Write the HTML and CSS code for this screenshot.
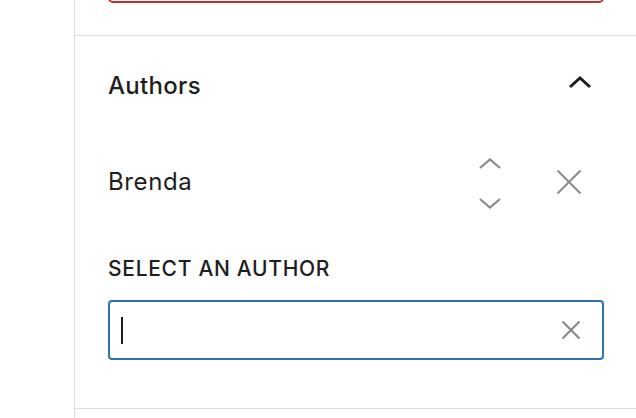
FILE: index.html
```html
<!DOCTYPE html>
<html lang="en">
<head>
<meta charset="utf-8">
<title>Authors panel</title>
<link rel="stylesheet" href="styles.css">
</head>
<body>
<div class="layout">
  <div class="gutter"></div>
  <aside class="sidebar">
    <div class="prev-panel">
      <div class="error-field"></div>
    </div>
    <section class="panel">
      <div class="panel-header">
        <h2 class="panel-title">Authors</h2>
        <svg class="toggle-icon" width="24" height="24" viewBox="0 0 24 24" aria-hidden="true">
          <path d="M2 16 L12 7 L22 16" fill="none" stroke="#1e1e1e" stroke-width="3"/>
        </svg>
      </div>
      <div class="author-row">
        <span class="author-name">Brenda</span>
        <div class="movers">
          <svg width="24" height="14" viewBox="0 0 24 14" aria-hidden="true">
            <path d="M2 11 L12 2.5 L22 11" fill="none" stroke="#8a8a8a" stroke-width="2.2"/>
          </svg>
          <svg width="24" height="14" viewBox="0 0 24 14" aria-hidden="true">
            <path d="M2 3 L12 11.5 L22 3" fill="none" stroke="#8a8a8a" stroke-width="2.2"/>
          </svg>
        </div>
        <svg class="remove-icon" width="26" height="26" viewBox="0 0 26 26" aria-hidden="true">
          <path d="M1.5 1.5 L24.5 24.5 M24.5 1.5 L1.5 24.5" fill="none" stroke="#8a8a8a" stroke-width="2"/>
        </svg>
      </div>
      <div class="field-label">SELECT AN AUTHOR</div>
      <div class="combo">
        <span class="caret"></span>
        <svg class="clear-icon" width="20" height="20" viewBox="0 0 20 20" aria-hidden="true">
          <path d="M1.5 1.5 L18.5 18.5 M18.5 1.5 L1.5 18.5" fill="none" stroke="#8a8a8a" stroke-width="2.2"/>
        </svg>
      </div>
    </section>
  </aside>
</div>
</body>
</html>
```

FILE: styles.css
```css
* {
  box-sizing: border-box;
}

html, body {
  margin: 0;
  padding: 0;
  background: #ffffff;
}

body {
  font-family: Inter, "Noto Sans", "Liberation Sans", sans-serif;
  color: #1e1e1e;
  width: 636px;
  height: 418px;
  overflow: hidden;
}

.layout {
  display: flex;
  height: 418px;
}

.gutter {
  width: 74px;
  flex: none;
}

.sidebar {
  flex: 1;
  border-left: 1.5px solid #dddddd;
  display: flex;
  flex-direction: column;
}

.prev-panel {
  height: 36px;
  overflow: hidden;
  padding: 0 32px 0 33px;
  border-bottom: 1px solid #dedede;
  flex: none;
}

.error-field {
  height: 40px;
  margin-top: -37px;
  border: 2px solid #bf2f2b;
  border-radius: 5px;
}

.panel {
  padding: 0 32px 48px 33px;
  border-bottom: 1px solid #dedede;
}

.panel-header {
  height: 96px;
  display: flex;
  align-items: center;
  justify-content: space-between;
}

.panel-title {
  margin: 0;
  padding-top: 2px;
  font-size: 24px;
  font-weight: 500;
  line-height: 29px;
  letter-spacing: 0.3px;
}

.toggle-icon {
  margin-right: 12px;
  margin-bottom: 2px;
}

.author-row {
  height: 99px;
  display: flex;
  align-items: center;
}

.author-name {
  font-size: 24px;
  line-height: 26px;
  letter-spacing: 0.6px;
  flex: 1;
}

.movers {
  display: flex;
  flex-direction: column;
  gap: 25px;
  margin-top: 4px;
}

.remove-icon {
  margin-left: 54px;
  margin-right: 22px;
}

.field-label {
  margin-top: 25px;
  font-size: 21px;
  font-weight: 500;
  line-height: 26px;
  letter-spacing: 0.7px;
}

.combo {
  margin-top: 18px;
  height: 60px;
  border: 2px solid #2f72b4;
  border-radius: 4px;
  display: flex;
  align-items: center;
  justify-content: space-between;
  padding: 0 21px 0 11px;
}

.caret {
  width: 2px;
  height: 27px;
  background: #1e1e1e;
}
```
